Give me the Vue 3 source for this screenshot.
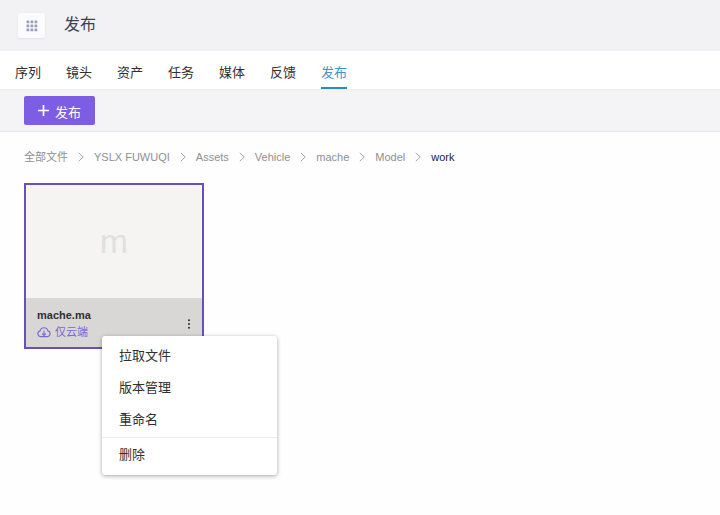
<script setup>
import { ref } from 'vue'

const tabs = ['序列', '镜头', '资产', '任务', '媒体', '反馈', '发布']
const activeTab = ref('发布')
const crumbs = ['全部文件', 'YSLX FUWUQI', 'Assets', 'Vehicle', 'mache', 'Model', 'work']
const menuOpen = ref(true)
const fileActions = ['拉取文件', '版本管理', '重命名']
const dots = [1, 5, 9]
</script>

<template>
  <div class="page">
    <header class="header">
      <button class="apps" type="button" aria-label="应用">
        <svg width="12" height="12" viewBox="0 0 12 12">
          <template v-for="y in dots" :key="y">
            <rect v-for="x in dots" :key="x" :x="x - 0.5" :y="y - 0.5" width="2.8" height="2.8" rx="0.6" />
          </template>
        </svg>
      </button>
      <h1>发布</h1>
    </header>

    <nav class="tabs">
      <a
        v-for="tab in tabs"
        :key="tab"
        href="#"
        :class="{ active: tab === activeTab }"
        @click.prevent="activeTab = tab"
      >{{ tab }}</a>
    </nav>

    <div class="toolbar">
      <button class="publish" type="button">
        <svg width="11" height="11" viewBox="0 0 11 11">
          <path d="M5.5 0v11M0 5.5h11" />
        </svg>
        <span>发布</span>
      </button>
    </div>

    <main class="content">
      <ol class="crumbs">
        <li v-for="(crumb, i) in crumbs" :key="crumb">
          <svg v-if="i" width="6" height="10" viewBox="0 0 6 10">
            <path d="M0.8 0.8L5.2 5L0.8 9.2" />
          </svg>
          <a href="#" :class="{ current: i === crumbs.length - 1 }" @click.prevent>{{ crumb }}</a>
        </li>
      </ol>

      <article class="card">
        <div class="preview">m</div>
        <div class="info">
          <div class="details">
            <div class="name">mache.ma</div>
            <div class="status">
              <svg width="14" height="12" viewBox="0 0 14 12">
                <path d="M4.6 10.6H3.6A2.9 2.9 0 0 1 3.1 4.9A4 4 0 0 1 10.9 4.9A2.9 2.9 0 0 1 10.4 10.6H9.4M7 4.8V9.4M5.1 7.6L7 9.5L8.9 7.6M4.6 10.6H9.4" />
              </svg>
              <span>仅云端</span>
            </div>
          </div>
          <button class="more" type="button" aria-label="更多" @click="menuOpen = !menuOpen">
            <svg width="4" height="10" viewBox="0 0 4 10">
              <circle cx="2" cy="1.2" r="1" />
              <circle cx="2" cy="5" r="1" />
              <circle cx="2" cy="8.8" r="1" />
            </svg>
          </button>
        </div>
        <div v-if="menuOpen" class="menu">
          <div class="group">
            <button v-for="action in fileActions" :key="action" type="button">{{ action }}</button>
          </div>
          <div class="group">
            <button type="button">删除</button>
          </div>
        </div>
      </article>
    </main>
  </div>
</template>

<style>
body {
  background: #fefefe;
}
</style>

<style scoped>
.page {
  min-height: 100vh;
  font-family: "Liberation Sans", "Noto Sans CJK SC", sans-serif;
  font-size: 13px;
  color: #303030;
}
button {
  font: inherit;
  color: inherit;
  border: 0;
  padding: 0;
  background: none;
  cursor: pointer;
}
a {
  color: inherit;
  text-decoration: none;
}
svg {
  display: block;
  flex: none;
}
.header {
  display: flex;
  align-items: center;
  gap: 19px;
  height: 51px;
  padding: 0 18px;
  box-sizing: border-box;
  background: #f2f2f4;
}
.apps {
  display: flex;
  align-items: center;
  justify-content: center;
  width: 27px;
  height: 25px;
  border-radius: 2px;
  background: #fbfbfd;
  box-shadow: 0 1px 2px #e2e3e8;
}
.apps svg {
  fill: #9a9fb8;
}
h1 {
  margin: 0;
  font-size: 16px;
  font-weight: 400;
  line-height: 24px;
  padding-bottom: 2px;
  color: #3d4058;
}
.tabs {
  display: flex;
  gap: 25px;
  padding: 0 15px;
  background: #fff;
  border-bottom: 1px solid #ececee;
}
.tabs a {
  height: 38px;
  line-height: 44px;
  box-sizing: border-box;
}
.tabs .active {
  color: #3f93cb;
  border-bottom: 2px solid #2490b8;
}
.toolbar {
  padding: 6px 24px;
  background: #f4f4f6;
  border-bottom: 1px solid #e9e9eb;
}
.publish {
  display: flex;
  align-items: center;
  justify-content: center;
  gap: 6px;
  width: 71px;
  height: 29px;
  border-radius: 2px;
  background: #7c5de3;
  color: #fff;
}
.publish span {
  padding-top: 2px;
}
.publish svg {
  fill: none;
  stroke: #fff;
  stroke-width: 1.7;
}
.content {
  padding: 16px 24px;
}
.crumbs {
  display: flex;
  gap: 10px;
  margin: 0 0 17px;
  padding: 0;
  list-style: none;
  font-size: 11px;
  line-height: 18px;
  color: #909090;
}
.crumbs li {
  display: flex;
  align-items: center;
  gap: 10px;
  white-space: nowrap;
}
.crumbs svg {
  fill: none;
  stroke: #a6a6a6;
}
.crumbs .current {
  color: #26262e;
}
.card {
  position: relative;
  width: 176px;
  border: 2px solid #6650bb;
}
.preview {
  display: flex;
  align-items: center;
  justify-content: center;
  height: 113px;
  background: #f5f4f3;
  color: #e0e0de;
  font-size: 34px;
}
.info {
  display: flex;
  align-items: center;
  justify-content: space-between;
  height: 49px;
  padding: 2px 10px 0 11px;
  box-sizing: border-box;
  background: #d8d7d6;
}
.name {
  font-size: 11px;
  font-weight: 700;
  line-height: 17px;
}
.status {
  display: flex;
  align-items: center;
  gap: 4px;
  font-size: 11px;
  line-height: 17px;
  color: #7c66d2;
}
.status svg {
  fill: none;
  stroke: #7c66d2;
  stroke-width: 1.1;
}
.more {
  padding: 4px 1px;
}
.more svg {
  fill: #303030;
}
.menu {
  position: absolute;
  top: 151px;
  left: 76px;
  width: 175px;
  border-radius: 3px;
  background: #fff;
  box-shadow: 0 1px 4px rgba(0, 0, 0, 0.35);
}
.group {
  padding: 4px 0 1px;
}
.group + .group {
  padding: 1px 0 4px;
  border-top: 1px solid #ececec;
}
.group button {
  display: block;
  width: 100%;
  padding: 0 17px;
  line-height: 32px;
  text-align: left;
}
</style>
